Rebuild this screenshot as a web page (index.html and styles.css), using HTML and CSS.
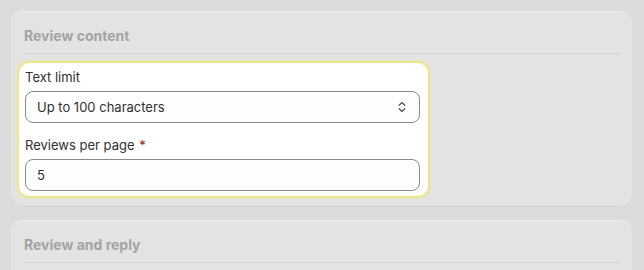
FILE: index.html
```html
<!DOCTYPE html>
<html>
<head>
<meta charset="utf-8">
<link rel="stylesheet" href="styles.css">
</head>
<body>
<div class="page">
  <section class="card">
    <h2 class="card-title">Review content</h2>
    <div class="highlight">
      <div class="field">
        <label class="label">Text limit</label>
        <div class="select">
          <span>Up to 100 characters</span>
          <svg class="chev" width="12" height="14" viewBox="0 0 12 14"><path d="M3.2 5.2 L6 2.6 L8.8 5.2 M3.2 8.8 L6 11.4 L8.8 8.8" fill="none" stroke="#555" stroke-width="1.3" stroke-linecap="round" stroke-linejoin="round"/></svg>
        </div>
      </div>
      <div class="field field-2">
        <label class="label">Reviews per page <span class="req">*</span></label>
        <div class="input">5</div>
      </div>
    </div>
  </section>
  <section class="card card-2">
    <h2 class="card-title">Review and reply</h2>
  </section>
</div>
</body>
</html>
```
FILE: styles.css
```css
html, body {
  margin: 0;
  padding: 0;
  background: #dcdcdc;
  font-family: Inter, "Noto Sans", sans-serif;
  overflow: hidden;
}
.page {
  padding: 11px 12px 0 11px;
  display: flex;
  flex-direction: column;
  gap: 14px;
}
.card {
  background: #e3e3e3;
  border-radius: 12px;
  padding: 15px 12px 8px 13px;
  box-shadow: 0 1px 0 rgba(0,0,0,0.04), inset 0 1px 0 rgba(255,255,255,0.35);
}
.card-title {
  margin: 0;
  font-size: 14px;
  font-weight: 650;
  line-height: 20px;
  color: #a3a3a3;
  padding-bottom: 7px;
  border-bottom: 1px solid #d2d2d2;
}
.highlight {
  margin: 7px 0 0 -7px;
  width: 395px;
  background: #ffffff;
  border: 2px solid #ece58e;
  border-radius: 12px;
  padding: 4px 8px 5px 6px;
  box-shadow: 0 0 0 1px rgba(240,234,170,0.5);
}
.field {
  display: flex;
  flex-direction: column;
  gap: 4px;
}
.field-2 {
  margin-top: 12px;
}
.label {
  font-size: 13px;
  line-height: 20px;
  color: #303030;
}
.req {
  color: #8e1f0b;
  margin-left: 1px;
}
.select, .input {
  box-sizing: border-box;
  height: 32px;
  border: 1px solid #8a8a8a;
  border-radius: 8px;
  background: #fdfdfd;
  padding: 0 11px;
  font-size: 13px;
  color: #303030;
  display: flex;
  align-items: center;
}
.select {
  justify-content: space-between;
  padding-right: 11px;
}
.chev {
  display: block;
}
.card-2 {
  padding-bottom: 20px;
}
```
